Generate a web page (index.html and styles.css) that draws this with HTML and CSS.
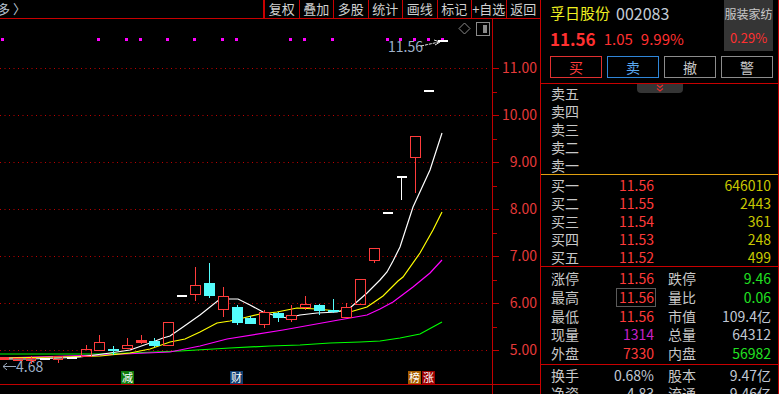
FILE: index.html
```html
<!DOCTYPE html>
<html lang="zh-CN">
<head>
<meta charset="utf-8">
<title>孚日股份 002083</title>
<link rel="stylesheet" href="styles.css">
</head>
<body>
<div class="app">
  <div class="left">
    <div class="toolbar">
      <div class="crumb"><span class="cut">多</span><span class="chev">〉</span></div>
      <div class="tools">
        <span class="tool">复权</span>
        <span class="tool">叠加</span>
        <span class="tool">多股</span>
        <span class="tool">统计</span>
        <span class="tool">画线</span>
        <span class="tool">标记</span>
        <span class="tool">+自选</span>
        <span class="tool">返回</span>
      </div>
    </div>
    <svg class="chart" width="540" height="375" viewBox="0 19 540 375" xmlns="http://www.w3.org/2000/svg">
      <!-- grid -->
      <g stroke="#c00000" stroke-width="1" stroke-dasharray="1 3.5">
        <line x1="0" y1="68.5" x2="490" y2="68.5"/>
        <line x1="0" y1="115.5" x2="490" y2="115.5"/>
        <line x1="0" y1="162.5" x2="490" y2="162.5"/>
        <line x1="0" y1="209.5" x2="490" y2="209.5"/>
        <line x1="0" y1="256.5" x2="490" y2="256.5"/>
        <line x1="0" y1="303.5" x2="490" y2="303.5"/>
        <line x1="0" y1="350.5" x2="490" y2="350.5"/>
      </g>
      <!-- axis -->
      <g stroke="#c00000" stroke-width="1.5" shape-rendering="crispEdges">
        <line x1="492.5" y1="19" x2="492.5" y2="394"/>
        <line x1="0" y1="384.5" x2="540" y2="384.5"/>
      </g>
      <g stroke="#c00000" stroke-width="1" shape-rendering="crispEdges">
        <line x1="492" y1="68.5" x2="499" y2="68.5"/>
        <line x1="492" y1="92.5" x2="497" y2="92.5"/>
        <line x1="492" y1="115.5" x2="499" y2="115.5"/>
        <line x1="492" y1="139.5" x2="497" y2="139.5"/>
        <line x1="492" y1="162.5" x2="499" y2="162.5"/>
        <line x1="492" y1="186.5" x2="497" y2="186.5"/>
        <line x1="492" y1="209.5" x2="499" y2="209.5"/>
        <line x1="492" y1="233.5" x2="497" y2="233.5"/>
        <line x1="492" y1="256.5" x2="499" y2="256.5"/>
        <line x1="492" y1="280.5" x2="497" y2="280.5"/>
        <line x1="492" y1="303.5" x2="499" y2="303.5"/>
        <line x1="492" y1="327.5" x2="497" y2="327.5"/>
        <line x1="492" y1="350.5" x2="499" y2="350.5"/>
      </g>
      <g class="axis-label" text-anchor="end">
        <text x="537" y="73">11.00</text>
        <text x="537" y="120">10.00</text>
        <text x="537" y="167">9.00</text>
        <text x="537" y="214">8.00</text>
        <text x="537" y="261">7.00</text>
        <text x="537" y="308">6.00</text>
        <text x="537" y="355">5.00</text>
      </g>

      <!-- magenta markers -->
      <g fill="#ff00ff">
        <rect x="1" y="38" width="3" height="3"/>
        <rect x="97" y="38" width="3" height="3"/>
        <rect x="125" y="38" width="3" height="3"/>
        <rect x="139" y="38" width="3" height="3"/>
        <rect x="166" y="38" width="3" height="3"/>
        <rect x="193" y="38" width="3" height="3"/>
        <rect x="221" y="38" width="3" height="3"/>
        <rect x="235" y="38" width="3" height="3"/>
        <rect x="289" y="38" width="3" height="3"/>
        <rect x="303" y="38" width="3" height="3"/>
        <rect x="331" y="38" width="3" height="3"/>
        <rect x="386" y="38" width="3" height="3"/>
        <rect x="399" y="38" width="3" height="3"/>
        <rect x="413" y="38" width="3" height="3"/>
        <rect x="427" y="38" width="3" height="3"/>
        <rect x="441" y="38" width="3" height="3"/>
      </g>

      <!-- top-right chart icons -->
      <path d="M464.5 23 L470 28.5 L464.5 34 L459 28.5 Z" fill="none" stroke="#8a8a8a" stroke-width="1"/>
      <rect x="476.5" y="22.5" width="13" height="13" fill="none" stroke="#8a8a8a" stroke-width="1"/>
      <rect x="483" y="25" width="4" height="8" fill="#8a8a8a"/>

      <!-- high annotation -->
      <text class="anno" x="388" y="52">11.56</text>
      <line x1="421" y1="46" x2="439" y2="42" stroke="#e8e8e8" stroke-width="1" stroke-dasharray="3 1"/>
      <path d="M434 40 L440 42 L435 45" fill="none" stroke="#e8e8e8" stroke-width="1"/>

      <!-- low annotation -->
      <path d="M3 366.5 L16 366.5 M3 366.5 L7 363 M3 366.5 L7 370" stroke="#9aa8bc" stroke-width="1" fill="none"/>
      <text class="anno" x="16" y="372">4.68</text>

      <!-- moving averages -->
      <g fill="none" stroke-width="1.2">
        <polyline stroke="#00ff00" points="0,354 100,354 130,353 180,351 230,348 270,346 300,345 330,343 360,342 380,341 400,338 420,334 442,322"/>
        <polyline stroke="#ff00ff" points="0,358 100,355 170,352 200,346 227,339 283,330 333,321 367,315 380,309 393,302 413,287 430,273 442,260"/>
        <polyline stroke="#ffff00" points="0,358 60,357 100,356 130,353 150,349 170,342 185,339 200,332 217,323 230,321 243,318 260,314 277,312 297,308 317,309 337,311 350,312 367,307 383,296 398,281 403,277 420,253 433,230 442,212"/>
        <polyline stroke="#ffffff" points="0,359 30,359 60,358 80,357 95,355 110,353 130,350 150,343 163,338 170,336 183,327 200,315 220,299 238,299 250,305 263,312 273,315 287,318 300,315 317,313 337,312 350,308 367,293 380,280 387,272 393,261 400,247 413,207 430,170 442,133"/>
      </g>

      <!-- candles -->
      <g shape-rendering="crispEdges" stroke-width="1">
        <!-- early small -->
        <rect x="0" y="357" width="9" height="3" fill="#ff3c3c"/>
        <rect x="13.5" y="358.5" width="9" height="2" fill="none" stroke="#ff3c3c"/>
        <line x1="31.5" y1="356" x2="31.5" y2="364" stroke="#ff3c3c"/>
        <rect x="26.5" y="358.5" width="9" height="2" fill="none" stroke="#ff3c3c"/>
        <rect x="40" y="358" width="10" height="2" fill="#ffffff"/>
        <rect x="53.5" y="356.5" width="9" height="3" fill="none" stroke="#ff3c3c"/>
        <line x1="58.5" y1="360" x2="58.5" y2="363" stroke="#ff3c3c"/>
        <rect x="67" y="357" width="10" height="2" fill="#ffffff"/>

        <!-- red hollow: x, top, bottom, wick -->
        <line x1="86.5" y1="345" x2="86.5" y2="349" stroke="#ff3c3c"/>
        <rect x="81.5" y="349.5" width="10" height="7" fill="none" stroke="#ff3c3c"/>

        <line x1="99.5" y1="335" x2="99.5" y2="342" stroke="#ff3c3c"/>
        <rect x="94.5" y="342.5" width="10" height="8" fill="none" stroke="#ff3c3c"/>

        <line x1="113.5" y1="346" x2="113.5" y2="355" stroke="#54fcfc"/>
        <rect x="108" y="349" width="11" height="2" fill="#54fcfc"/>

        <line x1="127.5" y1="338" x2="127.5" y2="345" stroke="#ff3c3c"/>
        <rect x="122.5" y="345.5" width="10" height="3" fill="none" stroke="#ff3c3c"/>

        <line x1="141.5" y1="335" x2="141.5" y2="344" stroke="#ff3c3c"/>
        <rect x="136" y="340" width="11" height="3" fill="#ff3c3c"/>

        <line x1="154.5" y1="338" x2="154.5" y2="347" stroke="#54fcfc"/>
        <rect x="149" y="341" width="11" height="5" fill="#54fcfc"/>

        <rect x="163.5" y="322.5" width="10" height="23" fill="none" stroke="#ff3c3c"/>

        <rect x="177" y="295" width="10" height="2" fill="#ffffff"/>

        <line x1="195.5" y1="267" x2="195.5" y2="301" stroke="#ff3c3c"/>
        <rect x="190.5" y="285.5" width="10" height="9" fill="#000" stroke="#ff3c3c"/>

        <line x1="209.5" y1="263" x2="209.5" y2="298" stroke="#54fcfc"/>
        <rect x="204" y="283" width="11" height="13" fill="#54fcfc"/>

        <line x1="223.5" y1="287" x2="223.5" y2="317" stroke="#ff3c3c"/>
        <rect x="218.5" y="296.5" width="10" height="13" fill="#000" stroke="#ff3c3c"/>

        <line x1="237.5" y1="305" x2="237.5" y2="325" stroke="#54fcfc"/>
        <rect x="232" y="307" width="11" height="16" fill="#54fcfc"/>

        <line x1="250.5" y1="316" x2="250.5" y2="324" stroke="#54fcfc"/>
        <rect x="245" y="318" width="11" height="6" fill="#54fcfc"/>

        <line x1="264.5" y1="310" x2="264.5" y2="328" stroke="#ff3c3c"/>
        <rect x="259.5" y="312.5" width="10" height="12" fill="#000" stroke="#ff3c3c"/>

        <line x1="278.5" y1="312" x2="278.5" y2="322" stroke="#54fcfc"/>
        <rect x="273" y="313" width="11" height="5" fill="#54fcfc"/>

        <line x1="291.5" y1="305" x2="291.5" y2="322" stroke="#ff3c3c"/>
        <rect x="286.5" y="315.5" width="10" height="4" fill="#000" stroke="#ff3c3c"/>

        <line x1="305.5" y1="296" x2="305.5" y2="310" stroke="#ff3c3c"/>
        <rect x="300.5" y="304.5" width="10" height="3" fill="#000" stroke="#ff3c3c"/>

        <line x1="319.5" y1="304" x2="319.5" y2="315" stroke="#54fcfc"/>
        <rect x="314" y="305" width="11" height="6" fill="#54fcfc"/>

        <line x1="333.5" y1="299" x2="333.5" y2="313" stroke="#54fcfc"/>
        <rect x="328" y="310" width="11" height="2" fill="#54fcfc"/>

        <line x1="346.5" y1="303" x2="346.5" y2="307" stroke="#ff3c3c"/>
        <rect x="341.5" y="307.5" width="10" height="10" fill="#000" stroke="#ff3c3c"/>

        <rect x="355.5" y="279.5" width="10" height="25" fill="none" stroke="#ff3c3c"/>

        <line x1="374.5" y1="260" x2="374.5" y2="263" stroke="#ff3c3c"/>
        <rect x="369.5" y="248.5" width="10" height="12" fill="#000" stroke="#ff3c3c"/>

        <rect x="383" y="212" width="10" height="2" fill="#ffffff"/>

        <rect x="397" y="176" width="10" height="2" fill="#ffffff"/>
        <line x1="401.5" y1="177" x2="401.5" y2="200" stroke="#ffffff"/>

        <line x1="415.5" y1="158" x2="415.5" y2="193" stroke="#ff3c3c"/>
        <rect x="410.5" y="136.5" width="10" height="21" fill="#000" stroke="#ff3c3c"/>

        <rect x="424" y="90" width="10" height="2" fill="#ffffff"/>

        <rect x="438" y="40" width="10" height="2" fill="#ffffff"/>
      </g>

      <!-- event tags -->
      <rect x="121" y="371" width="13" height="13" fill="#0d7a0d"/>
      <text class="tag" x="127.5" y="382">减</text>
      <rect x="230" y="371" width="13" height="13" fill="#103e70"/>
      <text class="tag" x="236.5" y="382">财</text>
      <rect x="408" y="371" width="13" height="13" fill="#a65c00"/>
      <text class="tag" x="414.5" y="382">榜</text>
      <rect x="422" y="371" width="13" height="13" fill="#9a0000"/>
      <text class="tag" x="428.5" y="382">涨</text>
    </svg>
  </div>

  <div class="panel">
    <div class="head">
      <div class="head-top">
        <div class="head-main">
          <div class="name-row"><span class="name">孚日股份</span><span class="code">002083</span></div>
          <div class="price-row"><span class="last">11.56</span><span class="chg">1.05</span><span class="chg">9.99%</span></div>
        </div>
        <div class="sector">
          <div class="sector-name">服装家纺</div>
          <div class="sector-pct">0.29%</div>
        </div>
      </div>
      <div class="actions">
        <span class="btn btn-buy">买</span>
        <span class="btn btn-sell">卖</span>
        <span class="btn">撤</span>
        <span class="btn">警</span>
      </div>
    </div>

    <div class="book sells">
      <div class="expand">
        <svg width="12" height="8" viewBox="0 0 12 8"><path d="M3 1 L6 3.5 L9 1 M3 4.5 L6 7 L9 4.5" fill="none" stroke="#e03030" stroke-width="1.2"/></svg>
      </div>
      <div class="row"><span class="lab">卖五</span><span class="pr"></span><span class="vol"></span></div>
      <div class="row"><span class="lab">卖四</span><span class="pr"></span><span class="vol"></span></div>
      <div class="row"><span class="lab">卖三</span><span class="pr"></span><span class="vol"></span></div>
      <div class="row"><span class="lab">卖二</span><span class="pr"></span><span class="vol"></span></div>
      <div class="row"><span class="lab">卖一</span><span class="pr"></span><span class="vol"></span></div>
    </div>

    <div class="book buys">
      <div class="row"><span class="lab">买一</span><span class="pr">11.56</span><span class="vol">646010</span></div>
      <div class="row"><span class="lab">买二</span><span class="pr">11.55</span><span class="vol">2443</span></div>
      <div class="row"><span class="lab">买三</span><span class="pr">11.54</span><span class="vol">361</span></div>
      <div class="row"><span class="lab">买四</span><span class="pr">11.53</span><span class="vol">248</span></div>
      <div class="row"><span class="lab">买五</span><span class="pr">11.52</span><span class="vol">499</span></div>
    </div>

    <div class="stats">
      <div class="srow"><span class="lab">涨停</span><span class="v red">11.56</span><span class="lab2">跌停</span><span class="v green">9.46</span></div>
      <div class="srow"><span class="lab">最高</span><span class="v red"><span class="boxed">11.56</span></span><span class="lab2">量比</span><span class="v green">0.06</span></div>
      <div class="srow"><span class="lab">最低</span><span class="v red">11.56</span><span class="lab2">市值</span><span class="v grey">109.4亿</span></div>
      <div class="srow"><span class="lab">现量</span><span class="v purple">1314</span><span class="lab2">总量</span><span class="v grey">64312</span></div>
      <div class="srow"><span class="lab">外盘</span><span class="v red">7330</span><span class="lab2">内盘</span><span class="v green">56982</span></div>
    </div>

    <div class="stats2">
      <div class="srow"><span class="lab">换手</span><span class="v grey">0.68%</span><span class="lab2">股本</span><span class="v grey">9.47亿</span></div>
      <div class="srow"><span class="lab">净资</span><span class="v grey">4.83</span><span class="lab2">流通</span><span class="v grey">9.46亿</span></div>
    </div>
  </div>
</div>
</body>
</html>
```

FILE: styles.css
```css
* { box-sizing: border-box; }

html, body {
  margin: 0;
  padding: 0;
  background: #000;
  width: 779px;
  height: 394px;
  overflow: hidden;
}

body {
  font-family: "Noto Sans CJK SC", "Noto Sans", sans-serif;
  color: #c8c8c8;
}

.app {
  display: flex;
  width: 779px;
  height: 394px;
}

.left {
  width: 540px;
  display: flex;
  flex-direction: column;
}

.toolbar {
  height: 19px;
  display: flex;
  border-bottom: 1px solid #c80000;
}

.crumb {
  width: 263px;
  display: flex;
  align-items: center;
  font-size: 13px;
  line-height: 18px;
  color: #b8c4d2;
  overflow: hidden;
}

.cut { margin-left: -3px; }
.chev { margin-left: 3px; }

.tools {
  flex: 1;
  display: flex;
  border-left: 2px solid #c80000;
}

.tool {
  flex: 1;
  text-align: center;
  font-size: 13px;
  line-height: 18px;
  color: #d0d0d0;
  border-left: 1px solid #c80000;
}

.tool:first-child { border-left: none; }

.chart {
  display: block;
  width: 540px;
  height: 375px;
}

.axis-label {
  font-family: "Noto Sans CJK SC", sans-serif;
  font-size: 14px;
  fill: #e63a3a;
}

.anno {
  font-family: "Noto Sans CJK SC", sans-serif;
  font-size: 14px;
  fill: #9fb0c8;
}

.tag {
  font-family: "Noto Sans CJK SC", sans-serif;
  font-size: 11px;
  fill: #ffffff;
  text-anchor: middle;
}

/* right panel */
.panel {
  position: relative;
  width: 239px;
  border-left: 1px solid #c80000;
  border-right: 1px solid #c80000;
  font-size: 14px;
}

.head {
  height: 84px;
  border-bottom: 1px solid #c80000;
  padding: 0 5px 0 9px;
}

.head-top {
  display: flex;
  height: 51px;
}

.head-main { flex: 1; }

.name-row {
  height: 26px;
  display: flex;
  align-items: center;
  gap: 6px;
}

.name {
  color: #f0f020;
  font-size: 15px;
  line-height: 26px;
}

.code {
  color: #c4ccd6;
  font-size: 16px;
  line-height: 26px;
}

.price-row {
  height: 25px;
  display: flex;
  align-items: center;
  gap: 8px;
}

.last {
  color: #ff3030;
  font-size: 17px;
  font-weight: bold;
  line-height: 25px;
}

.chg {
  color: #ff3030;
  font-size: 15px;
  line-height: 25px;
}

.sector {
  width: 49px;
  height: 51px;
  background: #353535;
  text-align: center;
}

.sector-name {
  font-size: 12px;
  line-height: 28px;
  color: #c8c8c8;
  white-space: nowrap;
}

.sector-pct {
  font-size: 13px;
  line-height: 20px;
  color: #ff3030;
}

.actions {
  display: flex;
  gap: 5px;
  margin-top: 5px;
}

.btn {
  width: 52px;
  height: 22px;
  border: 1px solid #8c8c8c;
  text-align: center;
  font-size: 14px;
  line-height: 20px;
  color: #c8c8c8;
}

.btn-buy { border-color: #e03030; color: #ff3c3c; }
.btn-sell { border-color: #2f86d8; color: #5aa8f0; }

.book {
  position: relative;
  padding: 0 7px 0 10px;
}

.sells {
  height: 91px;
  border-bottom: 1px solid #e0a010;
}

.buys {
  height: 92px;
  padding-top: 1px;
  border-bottom: 1px solid #c80000;
}

.row {
  height: 18px;
  display: grid;
  grid-template-columns: 40px 63px 1fr;
  line-height: 18px;
}

.pr { text-align: right; color: #ff3a3a; }
.vol { text-align: right; color: #c8c800; }

.expand {
  position: absolute;
  left: 96px;
  top: 0;
  width: 46px;
  height: 9px;
  background: #353535;
  border-radius: 0 0 4px 4px;
  display: flex;
  justify-content: center;
  align-items: flex-start;
}

.expand svg { display: block; margin-top: 0; }

.stats {
  height: 98px;
  padding: 2px 7px 0 10px;
  border-bottom: 1px solid #c80000;
}

.stats .srow { height: 18.75px; line-height: 18.75px; }

.stats2 {
  padding: 1px 7px 0 10px;
}

.stats2 .srow { height: 18px; line-height: 18px; }

.srow {
  display: grid;
  grid-template-columns: 40px 63px 54px 1fr;
}

.lab2 { padding-left: 14px; }

.v { text-align: right; white-space: nowrap; }

.red { color: #ff3a3a; }
.green { color: #22e022; }
.grey { color: #c0c8d4; }
.purple { color: #c820c8; }

.boxed {
  display: inline-block;
  border: 1px solid #5a5a5a;
  line-height: 17px;
  padding: 0 1px 0 2px;
  margin-right: -2px;
}
```
